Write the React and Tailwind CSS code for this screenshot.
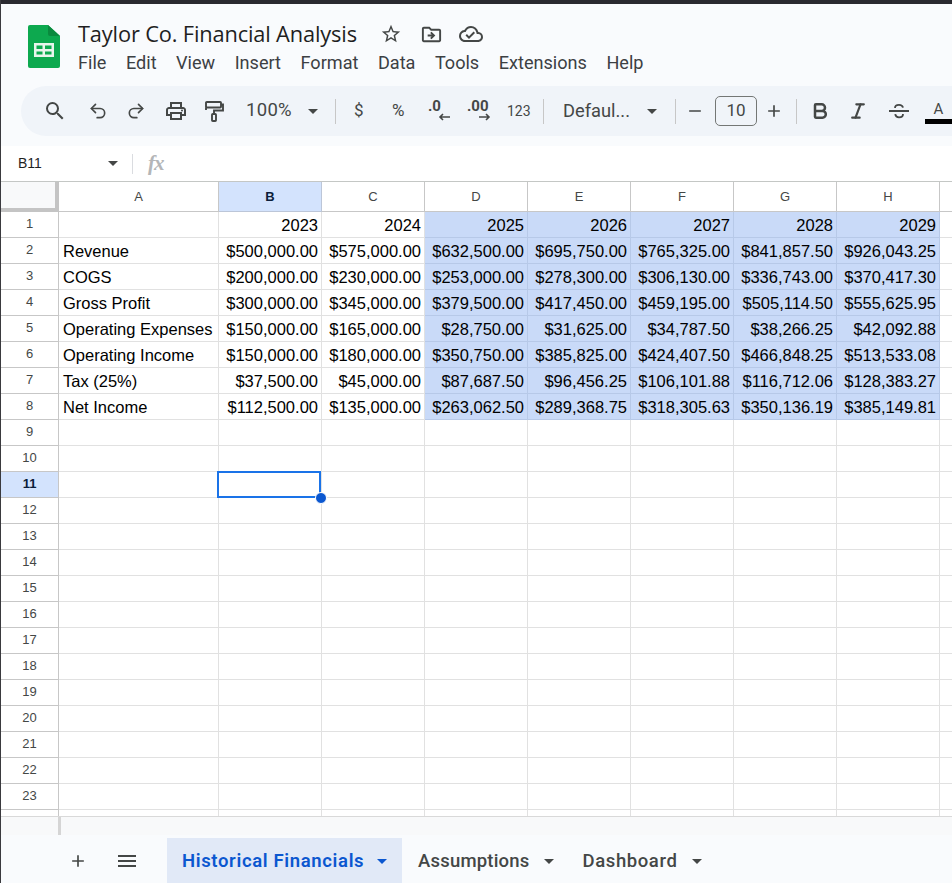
import React from "react";
import {
  MdOutlineSearch, MdOutlinePrint, MdStarBorder,
  MdOutlineDriveFileMove, MdOutlineCloudDone, MdAdd, MdRemove, MdMenu,
} from "react-icons/md";
import { Undo2, Redo2, Bold, Italic } from "lucide-react";

const cols = ["A", "B", "C", "D", "E", "F", "G", "H"];
const rows = [
  ["", "2023", "2024", "2025", "2026", "2027", "2028", "2029"],
  ["Revenue", "$500,000.00", "$575,000.00", "$632,500.00", "$695,750.00", "$765,325.00", "$841,857.50", "$926,043.25"],
  ["COGS", "$200,000.00", "$230,000.00", "$253,000.00", "$278,300.00", "$306,130.00", "$336,743.00", "$370,417.30"],
  ["Gross Profit", "$300,000.00", "$345,000.00", "$379,500.00", "$417,450.00", "$459,195.00", "$505,114.50", "$555,625.95"],
  ["Operating Expenses", "$150,000.00", "$165,000.00", "$28,750.00", "$31,625.00", "$34,787.50", "$38,266.25", "$42,092.88"],
  ["Operating Income", "$150,000.00", "$180,000.00", "$350,750.00", "$385,825.00", "$424,407.50", "$466,848.25", "$513,533.08"],
  ["Tax (25%)", "$37,500.00", "$45,000.00", "$87,687.50", "$96,456.25", "$106,101.88", "$116,712.06", "$128,383.27"],
  ["Net Income", "$112,500.00", "$135,000.00", "$263,062.50", "$289,368.75", "$318,305.63", "$350,136.19", "$385,149.81"],
];
const menus = ["File", "Edit", "View", "Insert", "Format", "Data", "Tools", "Extensions", "Help"];

const Sep = ({ cls }) => <div className={`w-px h-[25px] bg-[#c7c7c7] shrink-0 ${cls}`} />;

function SheetsLogo() {
  return (
    <svg width="32" height="43" viewBox="0 0 32 43" className="shrink-0">
      <path d="M2 0H20L32 11V41a2 2 0 0 1-2 2H2a2 2 0 0 1-2-2V2a2 2 0 0 1 2-2Z" fill="#0DA94F" />
      <path d="M20 0L32 11H22a2 2 0 0 1-2-2Z" fill="#0A8A3E" />
      <path d="M6 18H26V32H6ZM8.5 20.5V24H14.5V20.5ZM17 20.5V24H23.5V20.5ZM8.5 26.5V29.5H14.5V26.5ZM17 26.5V29.5H23.5V26.5Z" fill="#E8F5EC" fillRule="evenodd" />
    </svg>
  );
}

function PaintRollerIcon({ cls }) {
  return (
    <svg width="24" height="24" viewBox="0 0 24 24" className={cls} fill="none" stroke="#444746" strokeWidth="1.9">
      <rect x="4" y="3" width="15" height="5.5" rx="0.8" />
      <path d="M19 5.5H21V11.5H12V15" />
      <rect x="10" y="15" width="4" height="7" rx="0.8" />
      <path d="M4 8.5V11" />
    </svg>
  );
}

function StrikeIcon({ cls }) {
  return (
    <svg width="22" height="22" viewBox="0 0 22 22" className={cls} fill="none" stroke="#444746" strokeWidth="1.8">
      <path d="M1 11H21" />
      <path d="M7 8C7 5.8 8.8 4.8 11 4.8C13 4.8 14.6 5.6 15 7.6" />
      <path d="M7.2 14.2C7.6 16.4 9 17.4 11 17.4C13 17.4 15 16.4 15 14" />
    </svg>
  );
}

function Decimal({ text, right }) {
  return (
    <div className="relative w-[26px] h-[24px] shrink-0 text-[#444746] font-bold text-[15px] leading-[18px] font-['Roboto',sans-serif]">
      <span className="absolute top-[-2px] left-0">{text}</span>
      <svg width="14" height="8" viewBox="0 0 14 8" className={`absolute top-[14px] ${right ? "left-[11px]" : "left-[9px]"}`}>
        {right
          ? <path d="M1 4H11M8 1L11 4L8 7" stroke="#444746" strokeWidth="1.6" fill="none" />
          : <path d="M13 4H3M6 1L3 4L6 7" stroke="#444746" strokeWidth="1.6" fill="none" />}
      </svg>
    </div>
  );
}

const Caret = ({ cls = "" }) => <div className={`w-0 h-0 border-x-[5px] border-x-transparent border-t-[5px] border-t-[#444746] shrink-0 ${cls}`} />;

export default function App() {
  return (
    <div className="w-[952px] h-[883px] overflow-hidden bg-[#f9fbfd] flex flex-col border-l border-[#3a3a3e] font-['Roboto',sans-serif]">
      <div className="h-[4px] -ml-px bg-[#2a2a30] shrink-0" />

      {/* Title */}
      <div className="h-[82px] shrink-0 flex pl-[27px] pt-[21px]">
        <SheetsLogo />
        <div className="ml-[18px] flex flex-col">
          <div className="flex items-center h-[28px] -mt-[5px]">
            <span className="font-['Open_Sans',sans-serif] text-[21.8px] leading-[28px] text-[#1f1f1f] tracking-[-0.15px] w-[279px] whitespace-nowrap">Taylor Co. Financial Analysis</span>
            <MdStarBorder className="ml-[23px] text-[#444746]" size={22} />
            <MdOutlineDriveFileMove className="ml-[18px] text-[#444746]" size={23} />
            <MdOutlineCloudDone className="ml-[16px] text-[#444746]" size={24} />
          </div>
          <div className="flex items-center gap-[19.5px] h-[24px] mt-[3px] text-[18.1px] text-[#3c4043] whitespace-nowrap">
            {menus.map((m) => <span key={m}>{m}</span>)}
          </div>
        </div>
      </div>

      {/* Toolbar */}
      <div className="h-[50px] shrink-0 ml-[20px] rounded-l-[25px] bg-[#f0f4f9] flex items-center text-[#444746] overflow-hidden">
        <div className="w-[58px] h-full flex items-center pl-[22px] shrink-0"><MdOutlineSearch size={24} /></div>
        <Undo2 size={20} strokeWidth={2} className="ml-[9px] shrink-0" />
        <Redo2 size={20} strokeWidth={2} className="ml-[18px] shrink-0" />
        <MdOutlinePrint size={24} className="ml-[18px] shrink-0" />
        <PaintRollerIcon cls="ml-[14px] shrink-0" />
        <span className="ml-[20px] text-[18.5px] tracking-[0.3px] w-[46px] shrink-0">100%</span>
        <Caret cls="ml-[16px]" />
        <Sep cls="ml-[17px]" />
        <span className="ml-[18px] text-[17px] w-[10px] shrink-0">$</span>
        <span className="ml-[28px] text-[17px] w-[14px] shrink-0">%</span>
        <div className="ml-[22px]"><Decimal text=".0" /></div>
        <div className="ml-[13px]"><Decimal text=".00" right /></div>
        <span className="ml-[14px] text-[14px] w-[24px] shrink-0">123</span>
        <Sep cls="ml-[12px]" />
        <span className="ml-[19px] text-[18.3px] w-[67px] shrink-0 whitespace-nowrap">Defaul...</span>
        <Caret cls="ml-[17px]" />
        <Sep cls="ml-[18px]" />
        <MdRemove size={20} className="ml-[9px] shrink-0" />
        <div className="ml-[10px] w-[42px] h-[30px] rounded-[5px] border border-[#747775] flex items-center justify-center text-[17px] shrink-0">10</div>
        <MdAdd size={20} className="ml-[7px] shrink-0" />
        <Sep cls="ml-[12px]" />
        <Bold size={20} strokeWidth={3} className="ml-[13px] shrink-0" />
        <Italic size={20} strokeWidth={2.6} className="ml-[18px] shrink-0" />
        <StrikeIcon cls="ml-[20px] shrink-0" />
        <div className="ml-[15px] mt-[2px] w-[27px] h-[24px] relative shrink-0 text-center text-[15px] leading-[19px]">
          A
          <div className="absolute left-0 right-0 bottom-0 h-[5px] bg-black" />
        </div>
      </div>
      <div className="h-[10px] shrink-0" />

      {/* Formula bar */}
      <div className="h-[36px] shrink-0 bg-white flex items-center border-b border-[#c4c7c5] font-['Liberation_Sans',sans-serif]">
        <span className="ml-[17px] w-[89px] text-[14px] text-[#1f1f1f]">B11</span>
        <Caret cls="ml-[1px]" />
        <div className="ml-[14px] w-px h-[20px] bg-[#dadce0]" />
        <span className="ml-[15px] font-['Liberation_Serif',serif] italic font-bold text-[21px] text-[#b4b6b8] tracking-[-1px]">fx</span>
      </div>

      {/* Grid */}
      <div className="h-[634px] shrink-0 bg-white relative overflow-hidden font-['Liberation_Sans',sans-serif] text-[16.5px] text-black">
        <div className="grid grid-cols-[58px_160px_103px_103px_103px_103px_103px_103px_103px_103px] grid-rows-[30px_repeat(23,26px)_6px]">
          <div className="bg-[#f8f9fa] border-r-[4px] border-b-[4px] border-[#c4c4c4]" />
          {cols.map((c) => (
            <div key={c} className={`flex items-center justify-center text-[13px] border-r border-b ${c === "B" ? "bg-[#d3e3fd] border-[#bcc6d8] font-bold text-[#0b1d3a]" : "border-[#c7c7c7] text-[#444746]"}`}>{c}</div>
          ))}
          <div className="border-b border-[#c7c7c7]" />
          {Array.from({ length: 23 }, (_, r) => (
            <React.Fragment key={r}>
              <div className={`flex items-center justify-center text-[13px] border-r border-b pb-[1px] border-[#c7c7c7] ${r === 10 ? "bg-[#d3e3fd] font-bold text-[#0b1d3a]" : "text-[#444746]"}`}>{r + 1}</div>
              {cols.map((_, c) => {
                const blue = r < 8 && c >= 3;
                const val = r < 8 ? rows[r][c] : "";
                return (
                  <div key={c} className={`h-[26px] leading-[26px] whitespace-nowrap border-r border-b px-[3px] ${c === 0 ? "text-left pl-[4px]" : "text-right"} ${blue ? "bg-[#c9daf8] border-[#b7c9e8]" : "border-[#e1e1e1]"}`}>{val}</div>
                );
              })}
              <div className="border-b border-[#e1e1e1]" />
            </React.Fragment>
          ))}
          <div className="border-r border-[#c7c7c7]" />
          {cols.map((c) => <div key={c} className="border-r border-[#e1e1e1]" />)}
          <div />
        </div>
        <div className="absolute left-[216px] top-[289px] w-[104px] h-[27px] border-2 border-[#1a73e8] pointer-events-none" />
        <div className="absolute left-[314px] top-[310px] w-[12px] h-[12px] rounded-full bg-[#0b57d0] border border-white pointer-events-none" />
      </div>

      {/* Scrollbar strip */}
      <div className="h-[19px] shrink-0 bg-[#f8f9fa] border-t border-[#d9d9d9] flex">
        <div className="ml-[57px] w-[3px] bg-[#d5d5d5]" />
      </div>

      {/* Tabs */}
      <div className="flex-1 flex items-end">
        <MdAdd size={20} className="ml-[67px] mb-[12px] text-[#444746]" />
        <MdMenu size={24} className="ml-[27px] mb-[10px] text-[#444746]" />
        <div className="ml-[28px] w-[235px] h-[45px] pt-[2px] bg-[#e1e9f7] flex items-center pl-[15px] text-[#0b57d0] font-semibold text-[18.5px] tracking-[0.65px] whitespace-nowrap">
          Historical Financials
          <div className="ml-[13px] w-0 h-0 border-x-[5px] border-x-transparent border-t-[5px] border-t-[#0b57d0]" />
        </div>
        <div className="h-[45px] pt-[2px] ml-[16px] flex items-center text-[#444746] font-medium text-[18.5px] tracking-[0.2px]">
          Assumptions<Caret cls="ml-[14px]" />
        </div>
        <div className="h-[45px] pt-[2px] ml-[29px] flex items-center text-[#444746] font-medium text-[18.5px] tracking-[0.6px]">
          Dashboard<Caret cls="ml-[15px]" />
        </div>
      </div>
    </div>
  );
}
